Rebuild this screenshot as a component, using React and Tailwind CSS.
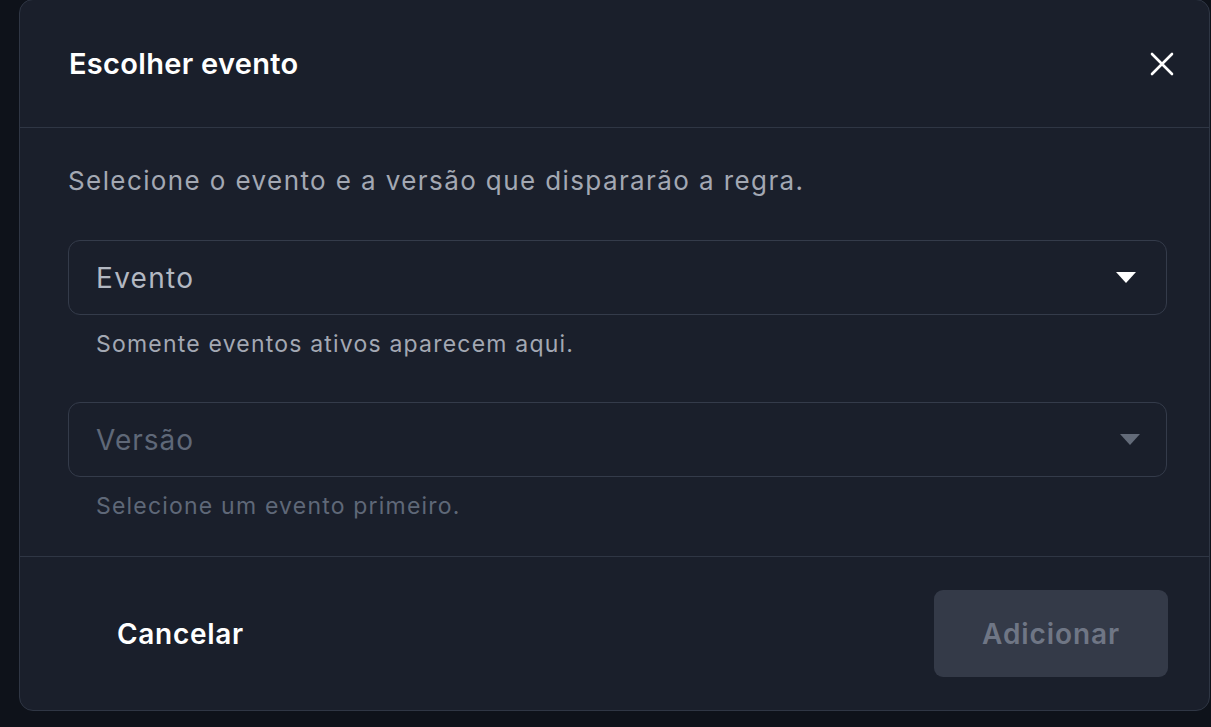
import React from "react";

const font = { fontFamily: '"Inter", "Open Sans", sans-serif' };

function Caret({ className }) {
  return (
    <svg width="20" height="11" viewBox="0 0 20 11" className={className}>
      <path d="M0 0 L20 0 L10 11 Z" fill="currentColor" />
    </svg>
  );
}

export default function App() {
  return (
    <div
      className="w-full h-[727px] bg-[#0e121a] overflow-hidden flex pl-[19px]"
      style={font}
    >
      <div className="w-[1191px] h-[712px] -mt-px rounded-[14px] border border-[#2f3644] bg-[#1a1f2b] flex flex-col shrink-0">
        {/* header */}
        <div className="h-[128px] shrink-0 flex items-center justify-between pl-[49px] pr-[35px] border-b border-[#2f3644]">
          <h2 className="text-[29px] font-semibold tracking-[0.3px] text-white">
            Escolher evento
          </h2>
          <svg width="24" height="24" viewBox="0 0 24 24" className="text-white">
            <path
              d="M2 2 L22 22 M22 2 L2 22"
              stroke="currentColor"
              strokeWidth="2.6"
              strokeLinecap="round"
            />
          </svg>
        </div>

        {/* body */}
        <div className="flex flex-col pl-[48px] h-[429px] shrink-0 border-b border-[#2f3644]">
          <p className="mt-[37px] h-[32px] leading-[32px] text-[26px] tracking-[1.4px] text-[#a3a8b3]">
            Selecione o evento e a versão que dispararão a regra.
          </p>
          <div className="mt-[43px] w-[1099px] h-[75px] rounded-[12px] border border-[#343b4a] flex items-center justify-between pl-[27px] pr-[30px]">
            <span className="text-[28px] tracking-[1.3px] text-[#b3b8c2]">Evento</span>
            <Caret className="text-white" />
          </div>
          <p className="mt-[16px] pl-[28px] h-[26px] leading-[26px] text-[23px] tracking-[1.2px] text-[#a3a8b3]">
            Somente eventos ativos aparecem aqui.
          </p>
          <div className="mt-[45px] w-[1099px] h-[75px] rounded-[12px] border border-[#343b4a] flex items-center justify-between pl-[27px] pr-[26px]">
            <span className="text-[28px] tracking-[1px] text-[#5f6878]">Versão</span>
            <Caret className="text-[#636b79]" />
          </div>
          <p className="mt-[16px] pl-[28px] h-[26px] leading-[26px] text-[23px] tracking-[1.2px] text-[#5f6878]">
            Selecione um evento primeiro.
          </p>
        </div>

        {/* footer */}
        <div className="flex-1 flex items-center justify-between pl-[97px] pr-[41px]">
          <button className="text-[28px] font-semibold tracking-[0.7px] text-white">Cancelar</button>
          <button className="w-[234px] h-[87px] rounded-[9px] bg-[#343a48] text-[28px] font-semibold tracking-[0.9px] text-[#6f7685]">
            Adicionar
          </button>
        </div>
      </div>
    </div>
  );
}
